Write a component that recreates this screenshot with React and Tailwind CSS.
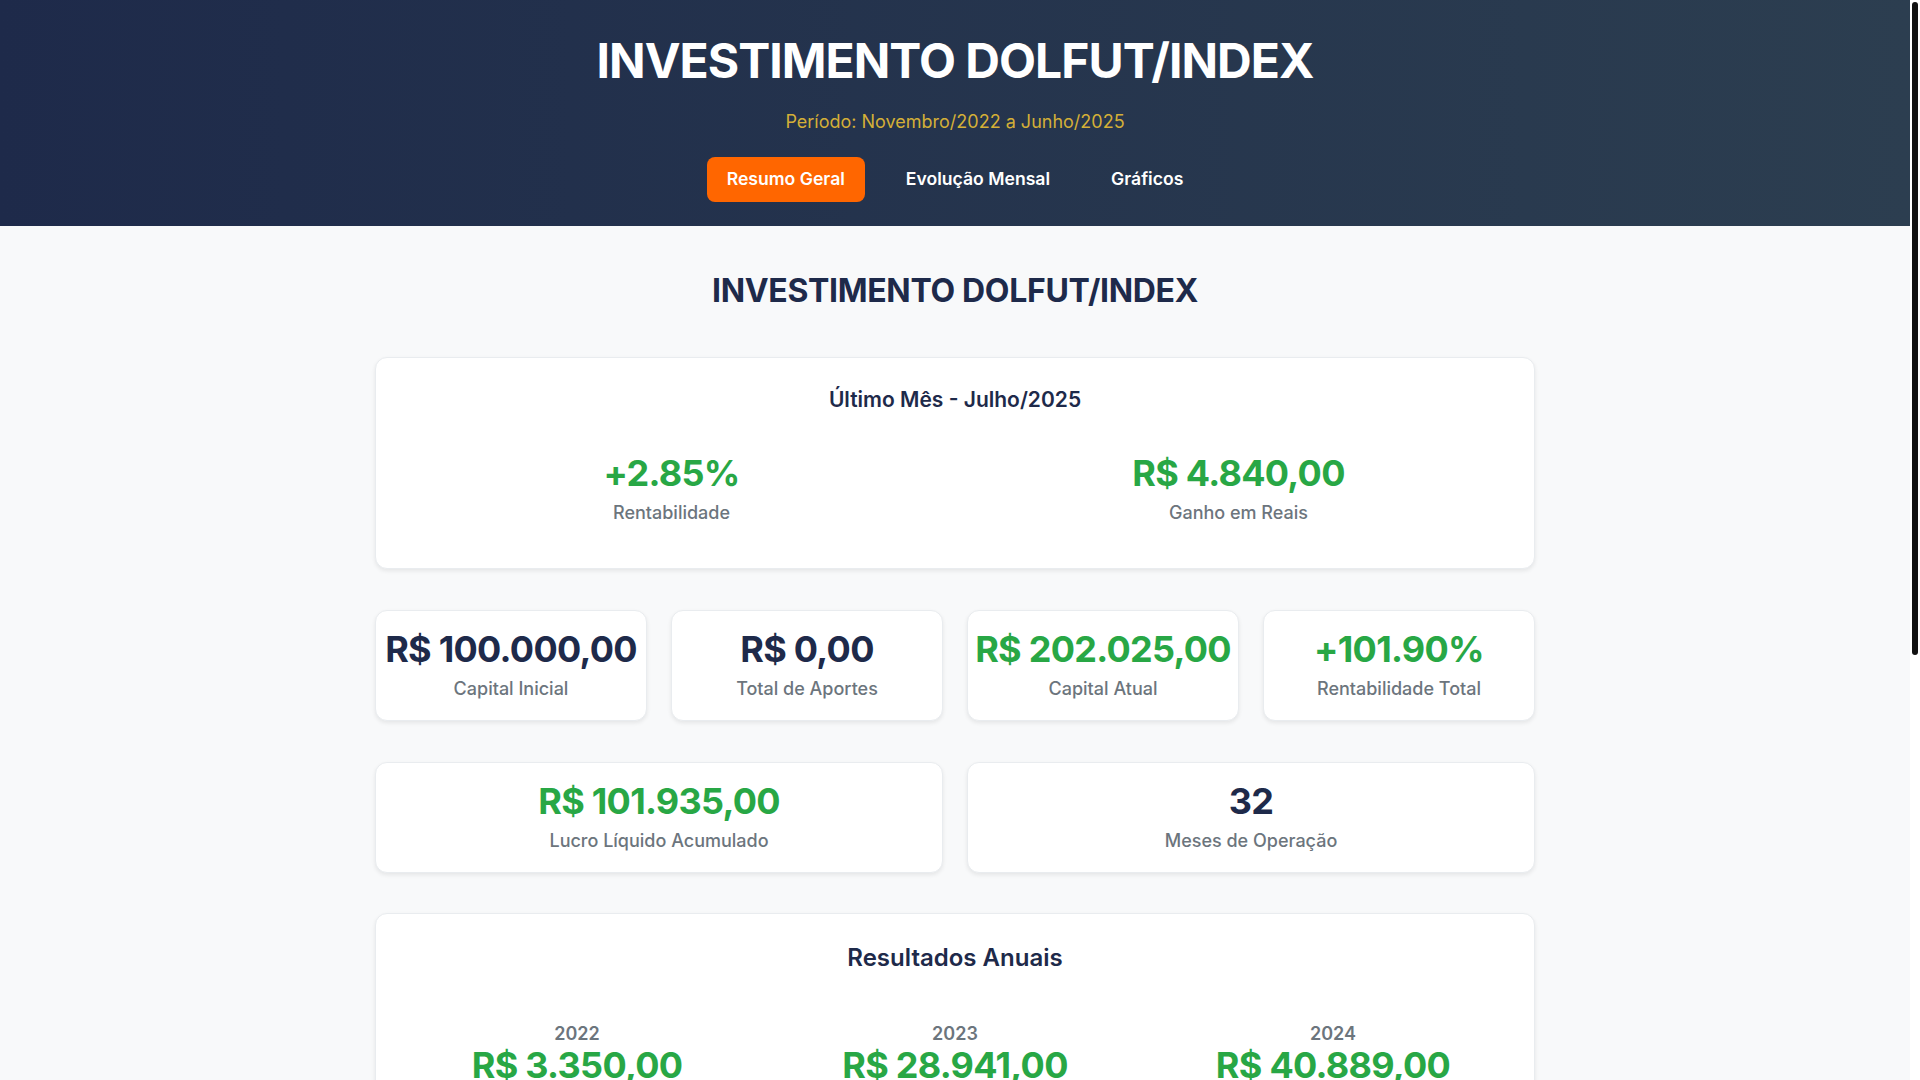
import React from "react";

const navy = "text-[#1e2a4a]";

function StatCard({ value, label, green }) {
  return (
    <div className="bg-white rounded-xl border border-[#e9ecef] shadow-[0_2px_4px_rgba(0,0,0,0.08)] pt-[17px] pb-[19px] px-1 text-center">
      <div
        className={`whitespace-nowrap text-[36px] leading-[43px] font-bold tracking-[-0.02em] ${
          green ? "text-[#28a745]" : navy
        }`}
      >
        {value}
      </div>
      <div className="mt-[6px] text-[18px] leading-[24px] font-medium text-[#6c757d]">{label}</div>
    </div>
  );
}

export default function App() {
  const tabs = ["Resumo Geral", "Evolução Mensal", "Gráficos"];
  const years = [
    { year: "2022", value: "R$ 3.350,00", pct: "+3.35%" },
    { year: "2023", value: "R$ 28.941,00", pct: "+27.99%" },
    { year: "2024", value: "R$ 40.889,00", pct: "+30.89%" },
    { year: "2025", value: "R$ 28.755,00", pct: "+16.61%" },
  ];

  return (
    <div className="flex h-screen bg-white font-['Inter',sans-serif]">
      <div className="flex-1 overflow-y-auto bg-[#f8f9fa] [scrollbar-width:none]">
        {/* header */}
        <header className="bg-gradient-to-r from-[#1e2a4a] to-[#2c3e50] pt-[32px] pb-[24px] text-center">
          <h1 className="text-[48px] leading-[58px] font-bold text-white tracking-[-0.02em]">
            INVESTIMENTO DOLFUT/INDEX
          </h1>
          <p className="mt-[19px] text-[18px] leading-[26px] text-[#d4af37]">
            Período: Novembro/2022 a Junho/2025
          </p>
          <nav className="mt-[22px] flex justify-center gap-[21px]">
            {tabs.map((t, i) => (
              <button
                key={t}
                className={`h-[45px] px-[20px] rounded-lg text-[17.6px] font-semibold text-white ${
                  i === 0 ? "bg-[#ff6600]" : "bg-transparent"
                }`}
              >
                {t}
              </button>
            ))}
          </nav>
        </header>

        {/* main */}
        <main className="max-w-[1200px] mx-auto px-[20px] pt-[46px] pb-[110px]">
          <h2 className={`text-[32px] leading-[38px] font-bold text-center tracking-[-0.01em] ${navy}`}>
            INVESTIMENTO DOLFUT/INDEX
          </h2>

          {/* último mês */}
          <section className="mt-[47px] bg-white rounded-xl border border-[#e9ecef] shadow-[0_2px_4px_rgba(0,0,0,0.08)] px-8 pt-[28px] pb-[43px]">
            <h3 className={`text-[21px] leading-[28px] font-semibold text-center ${navy}`}>
              Último Mês - Julho/2025
            </h3>
            <div className="mt-[38px] grid grid-cols-2 gap-10 text-center">
              <div>
                <div className="text-[36px] leading-[43px] font-bold text-[#28a745] tracking-[-0.02em]">+2.85%</div>
                <div className="mt-[6px] text-[18px] leading-[24px] font-medium text-[#6c757d]">Rentabilidade</div>
              </div>
              <div>
                <div className="text-[36px] leading-[43px] font-bold text-[#28a745] tracking-[-0.02em]">R$ 4.840,00</div>
                <div className="mt-[6px] text-[18px] leading-[24px] font-medium text-[#6c757d]">Ganho em Reais</div>
              </div>
            </div>
          </section>

          <div className="mt-[41px] grid grid-cols-4 gap-6">
            <StatCard value="R$ 100.000,00" label="Capital Inicial" />
            <StatCard value="R$ 0,00" label="Total de Aportes" />
            <StatCard value="R$ 202.025,00" label="Capital Atual" green />
            <StatCard value="+101.90%" label="Rentabilidade Total" green />
          </div>

          <div className="mt-[41px] grid grid-cols-2 gap-6">
            <StatCard value="R$ 101.935,00" label="Lucro Líquido Acumulado" green />
            <StatCard value="32" label="Meses de Operação" />
          </div>

          {/* resultados anuais */}
          <section className="mt-[40px] bg-white rounded-xl border border-[#e9ecef] shadow-[0_2px_4px_rgba(0,0,0,0.08)] px-8 pt-[28px] pb-[40px]">
            <h3 className={`text-[24px] leading-[32px] font-semibold text-center ${navy}`}>
              Resultados Anuais
            </h3>
            <div className="mt-[49px] grid grid-cols-3 gap-x-10 gap-y-12 text-center">
              {years.map((y) => (
                <div key={y.year}>
                  <div className="text-[18px] leading-[22px] font-semibold text-[#6c757d]">{y.year}</div>
                  <div className="text-[36px] leading-[40px] font-bold text-[#28a745] tracking-[-0.02em]">{y.value}</div>
                  <div className="mt-[6px] text-[16px] leading-[24px] font-medium text-[#6c757d]">{y.pct}</div>
                </div>
              ))}
            </div>
          </section>

          <section className="mt-[40px] bg-white rounded-xl border border-[#e9ecef] shadow-[0_2px_4px_rgba(0,0,0,0.08)] px-8 py-[28px]">
            <h3 className={`text-[24px] leading-[32px] font-semibold text-center ${navy}`}>Observações</h3>
            <p className="mt-4 text-[16px] leading-[26px] text-[#6c757d] text-center">
              Operações realizadas em contratos futuros de Dólar (DOLFUT) e Índice (INDEX).
            </p>
            <p className="mt-2 text-[16px] leading-[26px] text-[#6c757d] text-center">
              Rentabilidade calculada sobre o capital inicial de R$ 100.000,00, sem aportes adicionais.
            </p>
          </section>
        </main>

        <footer className="bg-gradient-to-r from-[#1e2a4a] to-[#2c3e50] py-[60px] text-center">
          <p className="text-[16px] leading-[24px] font-semibold text-white">INVESTIMENTO DOLFUT/INDEX</p>
          <p className="mt-2 text-[14px] leading-[20px] text-[#d4af37]">Novembro/2022 a Junho/2025</p>
        </footer>
      </div>

      {/* scrollbar */}
      <div className="w-[10px] shrink-0 bg-white px-[2px] pt-[2px]">
        <div className="h-[653px] rounded-full bg-[#111111]" />
      </div>
    </div>
  );
}
